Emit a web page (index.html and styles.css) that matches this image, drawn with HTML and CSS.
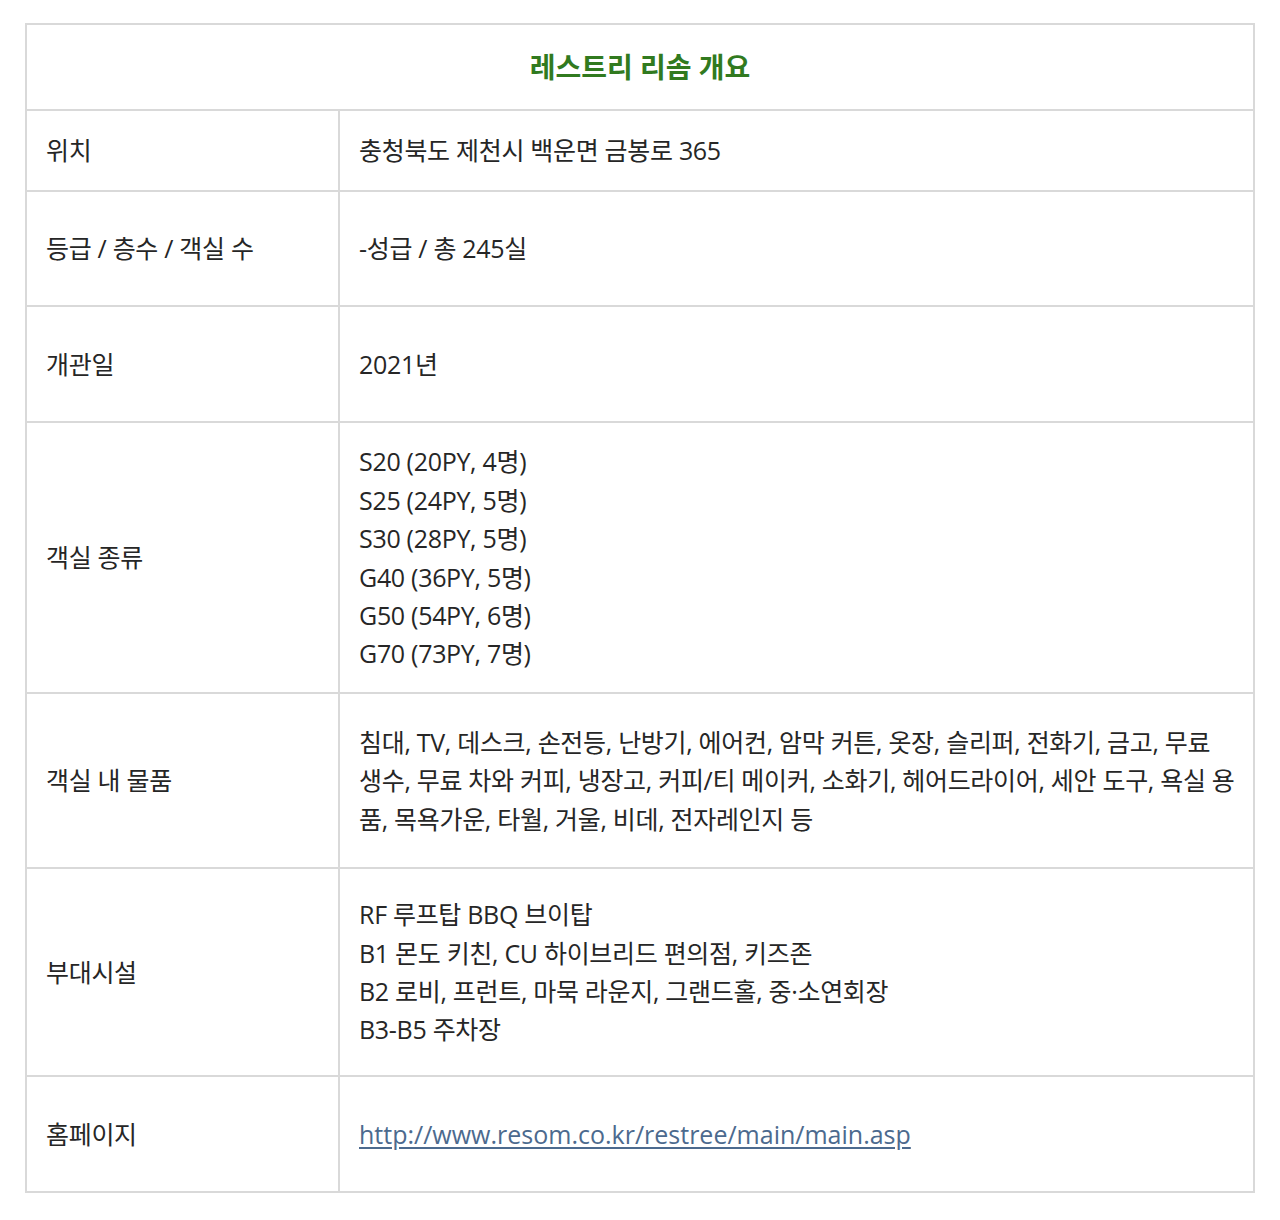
FILE: index.html
```html
<!DOCTYPE html>
<html lang="ko">
<head>
<meta charset="utf-8">
<title>레스트리 리솜 개요</title>
<link rel="stylesheet" href="styles.css">
</head>
<body>
<div class="page">
  <table class="overview">
    <colgroup>
      <col class="col-label">
      <col class="col-value">
    </colgroup>
    <thead>
      <tr class="row-title"><th colspan="2" class="title">레스트리 리솜 개요</th></tr>
    </thead>
    <tbody>
      <tr class="row-short"><td class="label">위치</td><td class="value">충청북도 제천시 백운면 금봉로 365</td></tr>
      <tr class="row-mid"><td class="label">등급 / 층수 / 객실 수</td><td class="value">-성급 / 총 245실</td></tr>
      <tr class="row-mid2"><td class="label">개관일</td><td class="value">2021년</td></tr>
      <tr class="row-rooms"><td class="label">객실 종류</td><td class="value">S20 (20PY, 4명)<br>S25 (24PY, 5명)<br>S30 (28PY, 5명)<br>G40 (36PY, 5명)<br>G50 (54PY, 6명)<br>G70 (73PY, 7명)</td></tr>
      <tr class="row-items"><td class="label">객실 내 물품</td><td class="value">침대, TV, 데스크, 손전등, 난방기, 에어컨, 암막 커튼, 옷장, 슬리퍼, 전화기, 금고, 무료<br>생수, 무료 차와 커피, 냉장고, 커피/티 메이커, 소화기, 헤어드라이어, 세안 도구, 욕실 용<br>품, 목욕가운, 타월, 거울, 비데, 전자레인지 등</td></tr>
      <tr class="row-facilities"><td class="label">부대시설</td><td class="value">RF 루프탑 BBQ 브이탑<br>B1 몬도 키친, CU 하이브리드 편의점, 키즈존<br>B2 로비, 프런트, 마묵 라운지, 그랜드홀, 중·소연회장<br>B3-B5 주차장</td></tr>
      <tr class="row-home"><td class="label">홈페이지</td><td class="value"><a class="link" href="#">http://www.resom.co.kr/restree/main/main.asp</a></td></tr>
    </tbody>
  </table>
</div>
</body>
</html>
```

FILE: styles.css
```css
html, body {
  margin: 0;
  padding: 0;
  background: #ffffff;
}
.page {
  padding: 23px 0 0 25px;
}
.overview {
  width: 1230px;
  table-layout: fixed;
  border-collapse: separate;
  border-spacing: 0;
  border-top: 2px solid #d9d9d9;
  border-left: 2px solid #d9d9d9;
  border-right: 2px solid #d9d9d9;
  font-family: "Open Sans", "Noto Sans CJK KR", sans-serif;
  font-size: 25px;
  line-height: 38.4px;
  letter-spacing: -0.3px;
  color: #262626;
  font-feature-settings: "palt" 1;
}
.col-label {
  width: 313px;
}
.overview th,
.overview td {
  box-sizing: border-box;
  border-bottom: 2px solid #d9d9d9;
  vertical-align: middle;
  padding: 0;
}
.overview .title {
  text-align: center;
  font-weight: 700;
  font-size: 28px;
  letter-spacing: 0;
  color: #317a1f;
}
.overview .label {
  padding: 0 0 0 19px;
  border-right: 2px solid #d9d9d9;
  text-align: left;
}
.overview .value {
  padding: 0 6px 0 19px;
  text-align: left;
  white-space: nowrap;
}
.link {
  color: #4c6a8e;
  letter-spacing: 0;
  text-decoration: underline;
  text-underline-offset: 3px;
}
.row-title { height: 86px; }
.row-short { height: 81px; }
.row-mid { height: 115px; }
.row-mid2 { height: 116px; }
.row-rooms { height: 271px; }
.row-items { height: 175px; }
.row-facilities { height: 208px; }
.row-home { height: 116px; }
```
